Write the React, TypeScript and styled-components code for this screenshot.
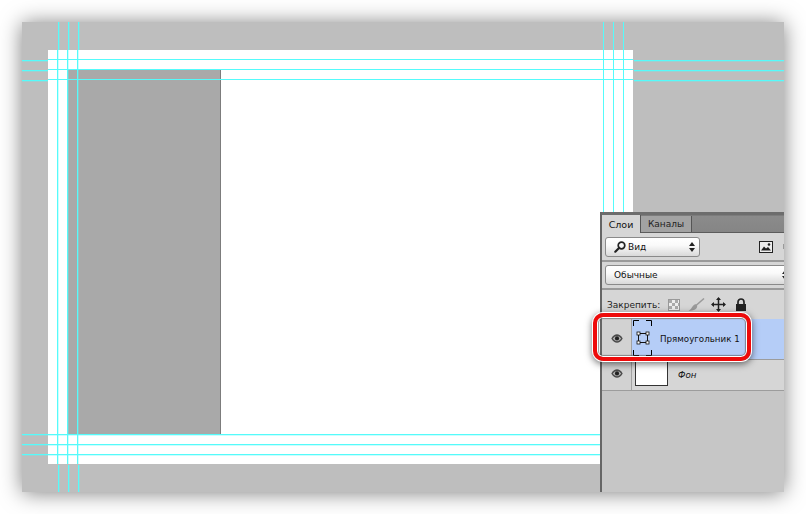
import React from 'react';
import styled, { createGlobalStyle } from 'styled-components';

const GlobalStyle = createGlobalStyle`
  html, body {
    margin: 0;
    padding: 0;
    background: #fff;
    width: 806px;
    height: 514px;
    overflow: hidden;
  }
`;

const Page = styled.div`
  width: 806px;
  height: 514px;
  padding: 22px;
  box-sizing: border-box;
  font-family: 'DejaVu Sans', Tahoma, sans-serif;
`;

const Canvas = styled.div`
  position: relative;
  width: 762px;
  height: 470px;
  box-sizing: border-box;
  padding: 28px 151px 28px 26px;
  background: #bebebe;
  box-shadow: 0 1px 20px rgba(0, 0, 0, 0.5);
`;

const Doc = styled.div`
  width: 585px;
  height: 414px;
  padding: 19px 0 0 19px;
  box-sizing: border-box;
  background: #fff;
`;

const Shape = styled.div`
  width: 154px;
  height: 366px;
  box-sizing: border-box;
  background: #a9a9a9;
  border: 1px solid #c47f7f;
  border-right-color: #7c7c7c;
`;

const HGuide = styled.div<{ $x: number; $y: number; $w: number; $thin: boolean }>`
  position: absolute;
  left: ${(p) => p.$x}px;
  top: ${(p) => p.$y}px;
  width: ${(p) => p.$w}px;
  height: 1px;
  background: #55fbfb;
  box-shadow: ${(p) => (p.$thin ? 'none' : '0 1px 0 rgba(85, 251, 251, 0.3)')};
`;

const VGuide = styled.div<{ $x: number; $y: number; $h: number; $thin: boolean }>`
  position: absolute;
  left: ${(p) => p.$x}px;
  top: ${(p) => p.$y}px;
  width: 1px;
  height: ${(p) => p.$h}px;
  background: #55fbfb;
  box-shadow: ${(p) => (p.$thin ? 'none' : '1px 0 0 rgba(85, 251, 251, 0.3)')};
`;

const Panel = styled.div`
  position: absolute;
  left: 578px;
  top: 190px;
  right: 0;
  bottom: 0;
  display: flex;
  flex-direction: column;
  overflow: hidden;
  box-sizing: border-box;
  background: #c6c6c6;
  border-left: 2px solid #666;
  color: #111;
`;

const TabBar = styled.div`
  height: 21px;
  flex: none;
  display: flex;
  align-items: flex-end;
  box-sizing: border-box;
  background: linear-gradient(#6d6d6d 0, #6d6d6d 3px, #8b8b8b 4px, #858585 100%);
  border-bottom: 1px solid #5c5c5c;
`;

const Tab = styled.div<{ $active?: boolean }>`
  height: ${(p) => (p.$active ? 18 : 16)}px;
  margin-bottom: ${(p) => (p.$active ? -1 : 0)}px;
  box-sizing: border-box;
  width: ${(p) => (p.$active ? 39 : 51)}px;
  display: flex;
  align-items: center;
  justify-content: center;
  font-size: ${(p) => (p.$active ? 9.5 : 9)}px;
  color: ${(p) => (p.$active ? '#111' : '#222')};
  background: ${(p) => (p.$active ? '#d6d6d6' : '#a2a2a2')};
  border-right: 1px solid #555;
`;

const Toolbar = styled.div<{ $h: number }>`
  flex: none;
  height: ${(p) => p.$h}px;
  box-sizing: border-box;
  display: flex;
  align-items: center;
  padding-left: 3px;
  background: #d6d6d6;
  border-bottom: 2px solid #9a9a9a;
`;

const Select = styled.div<{ $w: number }>`
  flex: none;
  width: ${(p) => p.$w}px;
  height: 20px;
  box-sizing: border-box;
  display: flex;
  align-items: center;
  gap: 2px;
  padding: 0 4px 0 8px;
  font-size: 9px;
  color: #111;
  background: linear-gradient(#fff, #fafafa 40%, #d9d9d9);
  border: 1px solid #8a8a8a;
  border-radius: 3px;
`;

const SelectText = styled.span`
  flex: 1;
`;

const ImageButton = styled.svg`
  margin-left: 59px;
  flex: none;
`;

const NextButton = styled.div`
  flex: none;
  width: 2px;
  height: 5px;
  margin-left: 10px;
  background: #9a9a9a;
`;

const LockRow = styled.div`
  flex: none;
  height: 29px;
  display: flex;
  align-items: center;
  padding-left: 5px;
  background: #d6d6d6;
  font-size: 9px;
  color: #222;
`;

const LockLabel = styled.span`
  width: 61px;
  flex: none;
`;

const LockIcon = styled.svg<{ $gap: number }>`
  flex: none;
  margin-right: ${(p) => p.$gap}px;
`;

const LayerRow = styled.div<{ $h: number }>`
  flex: none;
  height: ${(p) => p.$h}px;
  display: flex;
  box-sizing: border-box;
  background: #d6d6d6;
  border-bottom: 1px solid #9c9c9c;
`;

const EyeCell = styled.div<{ $lift: number }>`
  width: 30px;
  flex: none;
  display: flex;
  align-items: center;
  justify-content: center;
  box-sizing: border-box;
  padding-bottom: ${(p) => p.$lift}px;
  background: #d2d2d2;
  border-right: 1px solid #a2a2a2;
`;

const LayerBody = styled.div<{ $selected?: boolean }>`
  flex: 1;
  display: flex;
  align-items: center;
  padding-left: ${(p) => (p.$selected ? 1 : 3)}px;
  background: ${(p) => (p.$selected ? '#b5cdf7' : '#d6d6d6')};
`;

const LayerName = styled.span<{ $italic?: boolean }>`
  font-size: 8.7px;
  font-style: ${(p) => (p.$italic ? 'italic' : 'normal')};
  color: #111;
  margin-left: ${(p) => (p.$italic ? 10 : 7)}px;
  white-space: nowrap;
`;

const Thumb = styled.div`
  width: 33px;
  height: 28px;
  flex: none;
  margin-top: -2px;
  align-self: flex-start;
  box-sizing: border-box;
  background: #fff;
  border: 1px solid #333;
`;

const MaskIcon = styled.svg`
  flex: none;
  margin-bottom: 2px;
`;

const Highlight = styled.div`
  position: absolute;
  left: 571px;
  top: 291px;
  width: 158px;
  height: 48px;
  box-sizing: border-box;
  border: 4px solid #ee0b0b;
  border-radius: 10px;
  box-shadow:
    0 0 0 1px #fff,
    0 2px 7px 1px rgba(0, 0, 0, 0.55),
    inset 0 0 0 1px #fff,
    inset 0 0 1px 2px rgba(70, 70, 70, 0.55);
`;

const Eye = () => (
  <svg width="12" height="9" viewBox="0 0 12 9">
    <path d="M0.300 4.500C2 1.500 4 0.300 6 0.300S10 1.500 11.700 4.500C10 7.500 8 8.700 6 8.700S2 7.500 0.300 4.500Z" fill="#4a4a4a" />
    <path d="M1.800 4.600C3.200 2.700 4.600 2 6 2S8.800 2.700 10.200 4.600C8.800 6.500 7.400 7.300 6 7.300S3.200 6.500 1.800 4.600Z" fill="#b4b4b4" />
    <circle cx="6" cy="4.400" r="2.100" fill="#222" />
  </svg>
);

const Updown = () => (
  <svg width="6" height="10" viewBox="0 0 6 10">
    <path d="M3 0L6 4H0ZM3 10L0 6H6Z" fill="#222" />
  </svg>
);

const Search = () => (
  <svg width="12" height="12" viewBox="0 0 12 12">
    <circle cx="7.500" cy="4.500" r="3.300" fill="none" stroke="#222" strokeWidth="1.700" />
    <path d="M5 7L1.300 10.700" stroke="#222" strokeWidth="2.200" strokeLinecap="round" />
  </svg>
);

const MaskThumb = () => (
  <MaskIcon width="20" height="36" viewBox="0 0 20 36">
    <path d="M0.500 6V0.500H6M13 0.500H18.500V6M0.500 30V35.500H6M13 35.500H18.500V30" fill="none" stroke="#000" strokeWidth="1" />
    <rect x="5.500" y="13.500" width="9" height="9" fill="none" stroke="#111" />
    <rect x="4" y="12" width="3" height="3" fill="#fff" stroke="#111" strokeWidth="0.800" />
    <rect x="13" y="12" width="3" height="3" fill="#fff" stroke="#111" strokeWidth="0.800" />
    <rect x="4" y="21" width="3" height="3" fill="#fff" stroke="#111" strokeWidth="0.800" />
    <rect x="13" y="21" width="3" height="3" fill="#fff" stroke="#111" strokeWidth="0.800" />
  </MaskIcon>
);

// x, y, length, thin
const hGuides: [number, number, number, boolean][] = [
  [0, 38, 26, false], [0, 48, 26, false], [0, 58, 26, false],
  [26, 37, 585, true], [26, 47, 585, true], [26, 57, 585, true],
  [612, 38, 150, false], [612, 48, 150, false], [612, 58, 150, false],
  [0, 412, 578, false], [0, 422, 578, false], [0, 432, 578, false],
];

const vGuides: [number, number, number, boolean][] = [
  [36, 0, 28, false], [46, 0, 28, false], [56, 0, 28, false],
  [35, 28, 414, false], [45, 28, 414, false], [55, 28, 414, false],
  [36, 443, 27, false], [46, 443, 27, false], [56, 443, 27, false],
  [581, 0, 190, true], [591, 0, 190, true], [601, 0, 190, true],
];

export default function App() {
  return (
    <Page>
      <GlobalStyle />
      <Canvas>
        <Doc>
          <Shape />
        </Doc>
        {hGuides.map(([x, y, w, thin]) => (
          <HGuide key={`${x}-${y}`} $x={x} $y={y} $w={w} $thin={thin} />
        ))}
        {vGuides.map(([x, y, h, thin]) => (
          <VGuide key={`${x}-${y}`} $x={x} $y={y} $h={h} $thin={thin} />
        ))}
        <Panel>
          <TabBar>
            <Tab $active>Слои</Tab>
            <Tab>Каналы</Tab>
          </TabBar>
          <Toolbar $h={29}>
            <Select $w={95}>
              <Search />
              <SelectText>Вид</SelectText>
              <Updown />
            </Select>
            <ImageButton width="14" height="12" viewBox="0 0 14 12">
              <rect x="0.500" y="0.500" width="13" height="11" fill="#eee" stroke="#222" />
              <path d="M2 9.500L5 5.500L7 7.500L9 6L12 9.500Z" fill="#222" />
              <circle cx="10" cy="3.500" r="1.300" fill="#222" />
            </ImageButton>
            <NextButton />
          </Toolbar>
          <Toolbar $h={28}>
            <Select $w={188}>
              <SelectText>Обычные</SelectText>
              <Updown />
            </Select>
          </Toolbar>
          <LockRow>
            <LockLabel>Закрепить:</LockLabel>
            <LockIcon $gap={8} width="12" height="12" viewBox="0 0 12 12">
              <rect x="0.500" y="0.500" width="11" height="11" fill="#eee" stroke="#999" />
              <path d="M1 1H4V4H1ZM7 1H10V4H7ZM4 4H7V7H4ZM10 4H11V7H10ZM1 7H4V10H1ZM7 7H10V10H7Z" fill="#aaa" />
            </LockIcon>
            <LockIcon $gap={6} width="17" height="14" viewBox="0 0 17 14">
              <path d="M16 0.500L8 7.500" stroke="#9a9a9a" strokeWidth="1.500" />
              <path d="M8.500 6.500C10 8 9 11 6 12C4 12.800 2 12.800 0.500 12.500C3 11.500 3.500 10 4.500 8.500C5.500 7 7 5.500 8.500 6.500Z" fill="#9a9a9a" />
            </LockIcon>
            <LockIcon $gap={9} width="15" height="15" viewBox="0 0 15 15">
              <path d="M7.500 1V14M1 7.500H14" stroke="#222" strokeWidth="1.500" />
              <path d="M7.500 0L10 3H5ZM7.500 15L5 12H10ZM0 7.500L3 5V10ZM15 7.500L12 10V5Z" fill="#222" />
            </LockIcon>
            <LockIcon $gap={0} width="12" height="13" viewBox="0 0 12 13">
              <path d="M3 6V4A3 3 0 0 1 9 4V6" fill="none" stroke="#222" strokeWidth="1.700" />
              <rect x="1" y="6" width="10" height="7" fill="#222" />
            </LockIcon>
          </LockRow>
          <LayerRow $h={41}>
            <EyeCell $lift={2}>
              <Eye />
            </EyeCell>
            <LayerBody $selected>
              <MaskThumb />
              <LayerName>Прямоугольник 1</LayerName>
            </LayerBody>
          </LayerRow>
          <LayerRow $h={31}>
            <EyeCell $lift={4}>
              <Eye />
            </EyeCell>
            <LayerBody>
              <Thumb />
              <LayerName $italic>Фон</LayerName>
            </LayerBody>
          </LayerRow>
        </Panel>
        <Highlight />
      </Canvas>
    </Page>
  );
}
